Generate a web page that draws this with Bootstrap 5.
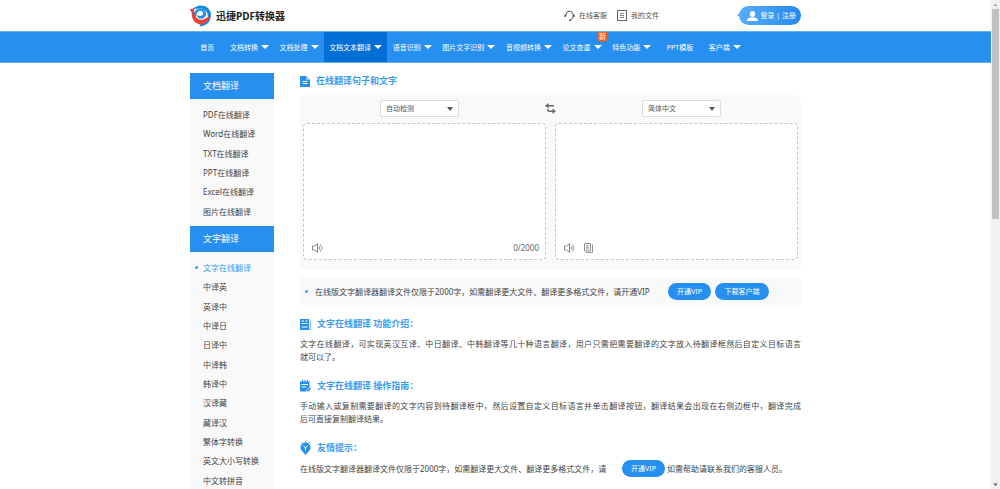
<!DOCTYPE html>
<html lang="zh-CN">
<head>
<meta charset="utf-8">
<meta name="viewport" content="width=device-width, initial-scale=1">
<title>迅捷PDF转换器 - 文字在线翻译</title>
<link rel="stylesheet" href="https://cdn.jsdelivr.net/npm/bootstrap@5.3.0/dist/css/bootstrap.min.css">
<style>
:root{--blue:#278ff0;--title:#3a9cf1}
body{font-family:"Noto Sans","Noto Sans CJK SC",sans-serif;font-size:8px;line-height:13px;color:#444;background:#fff}
a{color:inherit;text-decoration:none}
h1,h2,p,ul{margin:0;padding:0}
svg{display:block;flex:none}
.page{height:100vh;overflow:hidden;padding-right:9px}
.wrap{width:100%;max-width:611px;margin:0 auto}
.topbar{height:31px}
.brand{font-size:10px;line-height:22px;font-weight:700;color:#222}
.toplinks{font-size:7px;margin-right:80px;gap:10px;color:#555}
.toplinks a{gap:4px}
.login{font-size:7px;line-height:19px;height:19px;width:62px;border:0;border-radius:10px;color:#fff;background:linear-gradient(90deg,#58acfa,#2489ee);position:relative;padding:0 5px 0 8px}
.login::before{content:"";position:absolute;left:-2px;top:6px;border:solid transparent;border-width:3px 4px 3px 0;border-right-color:#58acfa}
.mainnav{background:var(--blue);border-top:1px solid #62aff6;border-bottom:1px solid #62aff6;height:32px;color:#fff;font-size:7px}
.mainnav ul{max-width:556px;height:30px}
.mainnav li{flex:1 1 auto;position:relative}
.mainnav a{height:30px;gap:3px}
.mainnav .drop::after{content:"";border:solid transparent;border-width:4px 4px 0;border-top-color:#fff}
.mainnav .plain a{padding:0 5px}
.mainnav .on{background:#036fd6}
.flag{position:absolute;right:0;top:0;background:#ff5d0a;color:#fff;line-height:9px;font-size:7px;padding:0 1px;border-radius:1px}
.flag::after{content:"";position:absolute;left:4px;top:9px;border:solid transparent;border-width:2px 2px 0 0;border-top-color:#ff5d0a}
.side{width:84px;background:#f9f9f9;flex:none;margin-top:10px}
.side h2{background:var(--blue);color:#fff;font-size:9px;line-height:26px;padding-left:13px;font-weight:400}
.side ul{display:grid;grid-auto-rows:1fr;align-items:center;margin:6px 0 5px;height:116px;padding-left:13px}
.side .long{height:232px}
.side .cur{color:var(--title);position:relative}
.dot{width:3px;height:3px;border-radius:50%;background:var(--title);flex:none}
.side .dot{position:absolute;left:-8px;top:5px}
.content{margin:10px 0 0 26px}
.sec{color:var(--title);font-size:9px;font-weight:700;line-height:16px;gap:6px}
.panel{background:#f9f9f9;border-radius:5px;padding:5px 3px 10px;margin-top:6px}
.langs{gap:86px;margin-bottom:6px}
.lang{appearance:none;width:79px;height:17px;border:1px solid #ddd;border-radius:2px;font-size:7px;line-height:13px;color:#555;padding:0 5px;background:#fff}
.pick{position:relative}
.pick::after{content:"";position:absolute;right:6px;top:7px;border:solid transparent;border-width:4px 3px 0;border-top-color:#555;pointer-events:none}
.boxes{display:grid;grid-template-columns:1fr 1fr;gap:9px}
.box{background:#fff;border:1px dashed #c6c6c6;border-radius:4px;height:137px;color:#666}
.box textarea{border:0;resize:none;outline:0;background:none;font-size:8px;padding:6px 8px}
.box footer{height:17px;gap:9px;padding:0 6px 0 8px;margin-bottom:3px}
.bare{border:0;background:none;padding:0}
.notice{background:#f9f9f9;margin:8px 0 11px;height:27px;padding-left:5px}
.notice p{padding-left:7px;width:360px}
.tip p{width:322px}
.tip span{margin-left:2px}
.pill{background:var(--blue);color:#fff;border:0;border-radius:9px;font-size:7px;line-height:17px;height:17px;width:43px;padding:0;text-align:center;flex:none}
.pill.wide{width:54px}
.para{text-align:justify;margin:5px 0 15px}
.sbar{position:fixed;right:0;top:0;bottom:0;width:9px;background:#f1f1f1}
.thumb{width:7px;background:#c1c1c1;height:43%}
</style>
</head>
<body>
<div class="page">
  <header class="wrap topbar d-flex align-items-center">
    <a href="#" class="d-flex align-items-center gap-1">
      <svg width="22" height="22" viewBox="0 0 22 22"><path d="M3 4Q6 .5 11 .5Q21 1 21 11Q20 20 11 21.500L9 20Q18 17 18 11Q17 4 11 3.500Q6 3.500 3 4Z" fill="#1789dc"/><path d="M5 6Q9 2 14 4.500Q18 8 15 12Q12 15 8 13L7 10Q11 12 13 9.500Q14 6.500 11 6Q8 5.500 7 8L6 12Q2 9 5 6Z" fill="#2097e6"/><path d="M0 4L4.500 3.500Q2.500 10 8 14Q13 16.500 20.500 10Q19 18 11 19.500Q4 19 2 12Q2 7 0 4Z" fill="#e94335"/></svg>
      <h1 class="brand">迅捷PDF转换器</h1>
    </a>
    <div class="toplinks d-flex ms-auto">
      <a href="#" class="d-flex align-items-center"><svg width="11" height="12" viewBox="0 0 11 12" fill="none" stroke="#555"><path d="M2 6V4.500Q2.500 1 5.500 1T9 4.500V7Q9 9 6.500 10"/><path d="M1.200 4.500V7M9.800 4.500V7" stroke-width="1.500"/><path d="M5 10.300H7" stroke-width="1.500"/></svg>在线客服</a>
      <a href="#" class="d-flex align-items-center"><svg width="10" height="11" viewBox="0 0 10 11" fill="none" stroke="#666"><rect x=".5" y=".5" width="9" height="10"/><path d="M3 3.500h4M3 5.500h4M3 7.500h4" stroke-width=".8"/></svg>我的文件</a>
    </div>
    <button class="login d-flex align-items-center justify-content-between" type="button"><svg width="11" height="10" viewBox="0 0 11 10" fill="#fff"><ellipse cx="5.500" cy="3" rx="2.600" ry="3"/><path d="M0 10Q0 7 4 6.300H7Q11 7 11 10Z"/></svg><span>登录 | 注册</span></button>
  </header>

  <nav class="mainnav">
    <div class="wrap">
      <ul class="list-unstyled d-flex">
        <li class="plain"><a href="#" class="d-flex align-items-center justify-content-center">首页</a></li>
        <li><a href="#" class="drop d-flex align-items-center justify-content-center">文档转换</a></li>
        <li><a href="#" class="drop d-flex align-items-center justify-content-center">文档处理</a></li>
        <li class="on"><a href="#" class="drop d-flex align-items-center justify-content-center">文档文本翻译</a></li>
        <li><a href="#" class="drop d-flex align-items-center justify-content-center">语音识别</a></li>
        <li><a href="#" class="drop d-flex align-items-center justify-content-center">图片文字识别</a></li>
        <li><a href="#" class="drop d-flex align-items-center justify-content-center">音视频转换</a></li>
        <li><a href="#" class="drop d-flex align-items-center justify-content-center">论文查重</a><span class="flag">新</span></li>
        <li><a href="#" class="drop d-flex align-items-center justify-content-center">特色功能</a></li>
        <li class="plain"><a href="#" class="d-flex align-items-center justify-content-center">PPT模板</a></li>
        <li><a href="#" class="drop d-flex align-items-center justify-content-center">客户端</a></li>
      </ul>
    </div>
  </nav>

  <div class="wrap d-flex align-items-start">
    <aside class="side">
      <h2>文档翻译</h2>
      <ul class="list-unstyled">
        <li><a href="#">PDF在线翻译</a></li><li><a href="#">Word在线翻译</a></li><li><a href="#">TXT在线翻译</a></li><li><a href="#">PPT在线翻译</a></li><li><a href="#">Excel在线翻译</a></li><li><a href="#">图片在线翻译</a></li>
      </ul>
      <h2>文字翻译</h2>
      <ul class="list-unstyled long">
        <li class="cur"><i class="dot"></i><a href="#">文字在线翻译</a></li><li><a href="#">中译英</a></li><li><a href="#">英译中</a></li><li><a href="#">中译日</a></li><li><a href="#">日译中</a></li><li><a href="#">中译韩</a></li><li><a href="#">韩译中</a></li><li><a href="#">汉译藏</a></li><li><a href="#">藏译汉</a></li><li><a href="#">繁体字转换</a></li><li><a href="#">英文大小写转换</a></li><li><a href="#">中文转拼音</a></li>
      </ul>
    </aside>

    <main class="content flex-fill">
      <h2 class="sec d-flex align-items-center"><svg width="10" height="11" viewBox="0 0 10 11"><path d="M0 0H6L10 4V11H0Z" fill="#278ff0"/><path d="M6 0V4H10Z" fill="#8dc6fa"/><path d="M2.500 5.500h5M2.500 7.500h5" stroke="#fff"/></svg>在线翻译句子和文字</h2>
      <section class="panel">
        <div class="langs d-flex justify-content-center align-items-center">
          <div class="pick"><select class="lang d-block" aria-label="源语言"><option>自动检测</option></select></div>
          <button class="bare" type="button" aria-label="交换语言"><svg width="11" height="11" viewBox="0 0 11 11" fill="#666"><path d="M0 2.700L3.500 0V2H9V3.500H3.500V5.500Z"/><path d="M11 8.300L7.500 5.500V7.500H4.500Q3.500 7.500 3.500 6H2Q2 9 4.500 9H7.500V11Z"/></svg></button>
          <div class="pick"><select class="lang d-block" aria-label="目标语言"><option>简体中文</option></select></div>
        </div>
        <div class="boxes">
          <div class="box d-flex flex-column">
            <textarea class="flex-fill w-100" aria-label="原文"></textarea>
            <footer class="d-flex align-items-center justify-content-between">
              <button class="bare" type="button" aria-label="朗读原文"><svg width="11" height="10" viewBox="0 0 11 10" fill="none" stroke="#888"><path d="M.5 3H2.500L5.500.7V9.300L2.500 7H.5Z"/><path d="M7 3.200Q8.300 5 7 6.800M8.500 1.500Q11.500 5 8.500 8.500" stroke-width=".9"/></svg></button>
              <span>0/2000</span>
            </footer>
          </div>
          <div class="box d-flex flex-column">
            <textarea class="flex-fill w-100" aria-label="译文" readonly></textarea>
            <footer class="d-flex align-items-center">
              <button class="bare" type="button" aria-label="朗读译文"><svg width="11" height="10" viewBox="0 0 11 10" fill="none" stroke="#888"><path d="M.5 3H2.500L5.500.7V9.300L2.500 7H.5Z"/><path d="M7 3.200Q8.300 5 7 6.800M8.500 1.500Q11.500 5 8.500 8.500" stroke-width=".9"/></svg></button>
              <button class="bare" type="button" aria-label="复制译文"><svg width="9" height="10" viewBox="0 0 9 10" fill="none" stroke="#888" stroke-width=".9"><path d="M.5.500H6.500V8H.5ZM8.500 1.500V9.500H2"/><path d="M2 2.500H4M2 4.200H5M2 6H5"/></svg></button>
            </footer>
          </div>
        </div>
      </section>

      <div class="notice d-flex align-items-center">
        <i class="dot"></i>
        <p class="text-nowrap">在线版文字翻译器翻译文件仅限于2000字，如需翻译更大文件、翻译更多格式文件，请开通VIP</p>
        <button class="pill me-1" type="button">开通VIP</button>
        <button class="pill wide" type="button">下载客户端</button>
      </div>

      <h2 class="sec d-flex align-items-center"><svg width="11" height="11" viewBox="0 0 11 11"><path d="M0 0H9V11H0Z" fill="#278ff0"/><path d="M10.500 2V10.500H9" fill="none" stroke="#7bbcf8"/><path d="M1.500 2H4M5.500 2H7.500M1.500 4.500H7.500M1.500 8H7.500" stroke="#fff"/></svg>文字在线翻译 功能介绍：</h2>
      <p class="para">文字在线翻译，可实现英汉互译、中日翻译、中韩翻译等几十种语言翻译，用户只需把需要翻译的文字放入待翻译框然后自定义目标语言<span class="text-nowrap">就可以了。</span></p>

      <h2 class="sec d-flex align-items-center"><svg width="11" height="12" viewBox="0 0 11 12"><path d="M0 1.500H9.500V7L6 11.500H1Q0 11.500 0 10Z" fill="#278ff0"/><path d="M2.500 0V3M5 0V3M7.500 0V3" stroke="#278ff0"/><path d="M1.500 4.500H8M1.500 7H6.500" stroke="#fff"/><path d="M6 11L10.500 6.500L11 9L8 12Z" fill="#278ff0" stroke="#fff" stroke-width=".5"/></svg>文字在线翻译 操作指南：</h2>
      <p class="para">手动输入或复制需要翻译的文字内容到待翻译框中，然后设置自定义目标语言并单击翻译按钮，翻译结果会出现在右侧边框中，翻译完成<span class="text-nowrap">后可直接复制翻译结果。</span></p>

      <h2 class="sec d-flex align-items-center mb-1"><svg width="11" height="14" viewBox="0 0 11 14"><path d="M5.500 1.500A5 5 0 0 1 8.500 10.500L5.500 14L2.500 10.500A5 5 0 0 1 5.500 1.500Z" fill="#278ff0"/><path d="M5.500 0V1M1 1L2 2M10 1L9 2" stroke="#278ff0" stroke-width=".8"/><path d="M3.500 4.500L5.500 7L7.500 4.500M5.500 7V9.500" fill="none" stroke="#fff"/></svg>友情提示：</h2>
      <div class="tip d-flex align-items-center text-nowrap">
        <p>在线版文字翻译器翻译文件仅限于2000字，如需翻译更大文件、翻译更多格式文件，请</p>
        <button class="pill" type="button">开通VIP</button>
        <span>如需帮助请联系我们的客服人员。</span>
      </div>
    </main>
  </div>
</div>

<div class="sbar d-flex flex-column align-items-center justify-content-between" aria-hidden="true">
  <svg width="9" height="9" viewBox="0 0 9 9"><path d="M2.500 6L4.500 3.500L6.500 6Z" fill="#a3a3a3"/></svg>
  <div class="thumb mb-auto"></div>
  <svg width="9" height="9" viewBox="0 0 9 9"><path d="M2.500 3.500L4.500 6L6.500 3.500Z" fill="#505050"/></svg>
</div>
<script src="https://cdn.jsdelivr.net/npm/bootstrap@5.3.0/dist/js/bootstrap.bundle.min.js"></script>
</body>
</html>
